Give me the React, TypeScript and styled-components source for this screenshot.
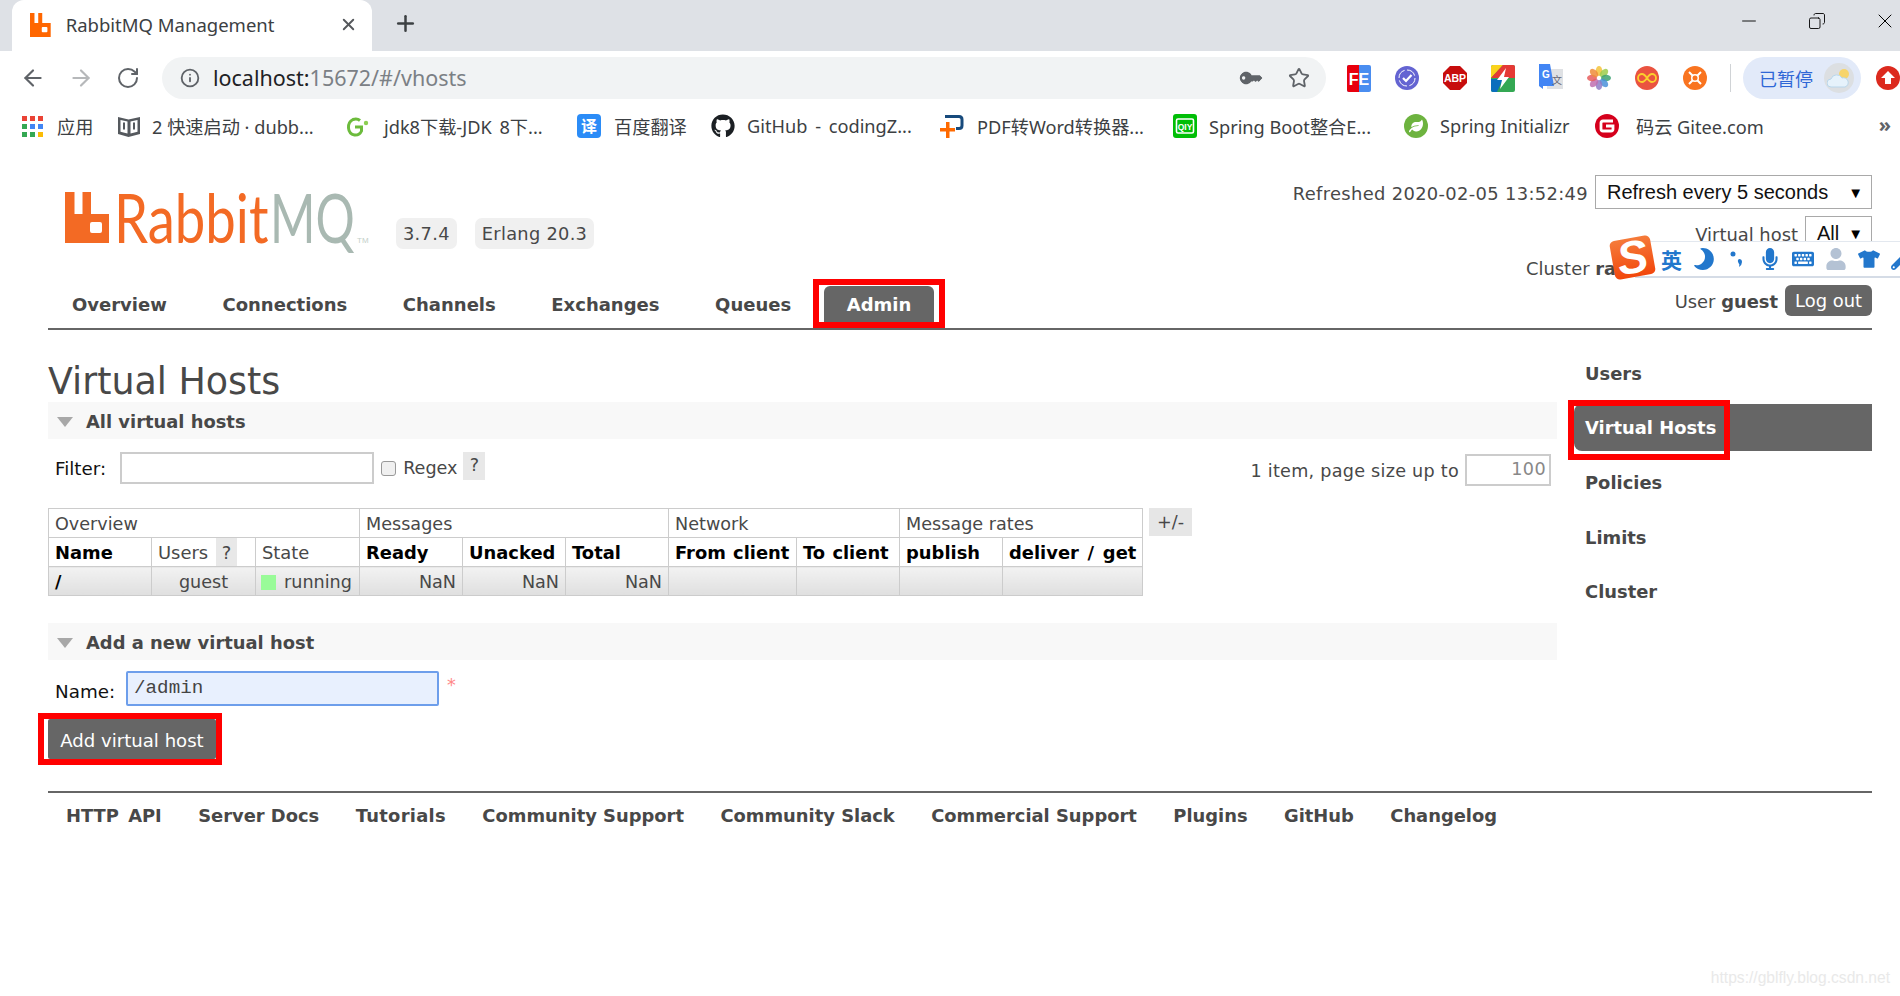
import React from "react";
import styled, { createGlobalStyle } from "styled-components";
import { ArrowLeft, ArrowRight, Info, Minus, Plus, RotateCw, Star, X, Copy } from "lucide-react";
import { FaGithub, FaKey, FaMicrophone, FaMoon, FaTshirt, FaUser, FaWrench, FaKeyboard, FaLeaf } from "react-icons/fa";

const GlobalStyle = createGlobalStyle`
  html, body {
    margin: 0;
    padding: 0;
    background: #fff;
    overflow: hidden;
  }
  * { box-sizing: border-box; }
`;

const VERDANA = `"DejaVu Sans", Verdana, sans-serif`;
const CHROME_FONT = `"Noto Sans", "Noto Sans CJK SC", sans-serif`;

const Shell = styled.div`
  position: relative;
  width: 1900px;
  height: 996px;
  overflow: hidden;
`;

/* browser chrome */
const TabStrip = styled.div`
  height: 51px;
  background: #dee1e6;
  display: flex;
  align-items: flex-end;
  padding-left: 12px;
`;

const Tab = styled.div`
  width: 360px;
  height: 51px;
  flex: none;
  background: #fff;
  border-radius: 12px 12px 0 0;
  display: flex;
  align-items: center;
  padding: 0 14px 2px 18px;
  color: #3c4043;
  font: 18.5px ${CHROME_FONT};
  svg { flex: none; }
`;

const TabTitle = styled.span`
  flex: 1;
  margin-left: 15px;
`;

const NewTab = styled.div`
  margin: 0 0 5px 21px;
  height: 46px;
  display: flex;
  align-items: center;
  color: #3c4043;
`;

const WindowButtons = styled.div`
  margin: 0 -19px auto auto;
  display: flex;
  align-items: center;
  height: 42px;
  color: #000;
`;

const WindowButton = styled.div`
  width: 68px;
  display: flex;
  justify-content: center;
`;

const Toolbar = styled.div`
  height: 54px;
  display: flex;
  align-items: flex-start;
  padding-top: 6px;
`;

const NavIcons = styled.div`
  width: 162px;
  height: 42px;
  flex: none;
  display: flex;
  align-items: center;
  padding-left: 20px;
  gap: 22px;
  color: #5f6368;
`;

const Omnibox = styled.div`
  width: 1164px;
  height: 42px;
  flex: none;
  border-radius: 21px;
  background: #f1f3f4;
  display: flex;
  align-items: center;
  padding: 0 16px 0 18px;
  color: #5f6368;
`;

const Url = styled.div`
  flex: 1;
  margin: 0 0 2px 13px;
  font: 21.5px ${CHROME_FONT};
  color: #7b8085;
  b {
    font-weight: 400;
    color: #202124;
  }
`;

const OmniIcons = styled.div`
  display: flex;
  align-items: center;
  gap: 29px;
`;

const Extensions = styled.div<{ $pad: number }>`
  height: 42px;
  flex: none;
  display: flex;
  align-items: center;
  padding-left: ${(p) => p.$pad}px;
  gap: 24px;
`;

const ToolbarSeparator = styled.div`
  width: 1px;
  height: 28px;
  background: #d0d3d6;
  margin-left: -1px;
`;

const PausedPill = styled.div`
  margin-left: 12px;
  width: 118px;
  height: 42px;
  flex: none;
  border-radius: 21px;
  background: #e2eaf9;
  display: flex;
  align-items: center;
  padding-left: 16px;
  font: 18px "Noto Sans CJK SC", sans-serif;
  color: #2f67d6;
`;

const Weather = styled.div`
  margin-left: 11px;
  width: 30px;
  height: 30px;
  border-radius: 50%;
  background: #dcdfe2;
  display: flex;
  align-items: center;
  justify-content: center;
`;

const BookmarkBar = styled.div`
  height: 42px;
  display: flex;
  align-items: center;
  position: relative;
  padding-left: 22px;
  font: 18.2px ${CHROME_FONT};
  color: #3c4043;
`;

const Bookmark = styled.div<{ $width: number; $gap?: number; $spread?: boolean }>`
  width: ${(p) => p.$width}px;
  flex: none;
  display: flex;
  align-items: center;
  gap: ${(p) => p.$gap ?? 13}px;
  white-space: nowrap;
  word-spacing: ${(p) => (p.$spread ? "3px" : "normal")};
  svg { flex: none; }
`;

const BookmarkMore = styled.div`
  position: absolute;
  right: 9px;
  top: 6px;
  font: bold 20px ${CHROME_FONT};
  color: #5f6368;
`;

/* management page */
const Page = styled.div`
  padding: 0 28px 0 48px;
  font-family: ${VERDANA};
  font-size: 17.6px;
  color: #484848;
`;

const Header = styled.div`
  display: flex;
  justify-content: space-between;
  height: 183px;
  border-bottom: 2px solid #666;
`;

const LogoRow = styled.div`
  display: flex;
  align-items: flex-end;
  height: 102px;
  padding-left: 17px;
`;

const LogoSvg = styled.svg`
  flex: none;
  margin-bottom: -10px;
`;

const Badge = styled.div<{ $gap: number }>`
  height: 31px;
  line-height: 32px;
  margin-left: ${(p) => p.$gap}px;
  padding: 0 7px;
  border-radius: 7px;
  background: #f0f0f0;
  font-size: 17.8px;
  letter-spacing: 0.3px;
`;

const Nav = styled.div`
  display: flex;
  margin: 37px 0 0 1px;
  gap: 9.6px;
`;

const NavItem = styled.div<{ $active?: boolean }>`
  position: relative;
  height: 36px;
  line-height: 38px;
  padding: 0 23px;
  font-weight: bold;
  font-size: 18px;
  color: ${(p) => (p.$active ? "#fff" : "#484848")};
  background: ${(p) => (p.$active ? "#666" : "transparent")};
  border-radius: 6px 6px 0 0;
`;

const HeaderInfo = styled.div`
  display: flex;
  flex-direction: column;
  align-items: flex-end;
  padding-top: 28px;
`;

const InfoRow = styled.div<{ $height: number; $top: number }>`
  display: flex;
  align-items: center;
  height: ${(p) => p.$height}px;
  margin-top: ${(p) => p.$top}px;
  gap: 7px;
  font-size: 17.9px;
`;

const InfoText = styled.span<{ $tracking?: number }>`
  margin-top: 2px;
  letter-spacing: ${(p) => p.$tracking ?? 0}px;
`;

const ClusterLine = styled.div`
  width: 346px;
  white-space: nowrap;
`;

const FakeSelect = styled.div<{ $width: number }>`
  height: 34px;
  display: flex;
  align-items: center;
  justify-content: space-between;
  border: 1px solid #a9a9a9;
  background: #fff;
  padding: 1px 8px 0 11px;
  color: #111;
  font: 20px "Liberation Sans", Arial, sans-serif;
  width: ${(p) => p.$width}px;
`;

const SelectArrow = styled.span`
  font-size: 15px;
  color: #000;
`;

const LogOut = styled.div`
  height: 31px;
  line-height: 32px;
  padding: 0 10px;
  border-radius: 6px;
  background: #666;
  color: #fff;
`;

const Main = styled.div`
  display: flex;
  gap: 17px;
`;

const Content = styled.div`
  width: 1509px;
  flex: none;
`;

const Title = styled.h1`
  margin: 0;
  height: 72px;
  padding-top: 33px;
  font-size: 36.4px;
  line-height: 38px;
  font-weight: normal;
  color: #484848;
`;

const SectionHeader = styled.div<{ $top?: number }>`
  height: 37px;
  margin-top: ${(p) => p.$top ?? 0}px;
  background: #f8f8f8;
  display: flex;
  align-items: center;
  padding: 2px 0 0 9px;
  gap: 13px;
  font-weight: bold;
  font-size: 17.9px;
`;

const Triangle = styled.span`
  width: 0;
  height: 0;
  border-left: 8.5px solid transparent;
  border-right: 8.5px solid transparent;
  border-top: 10px solid #a8a8a8;
`;

const FilterRow = styled.div`
  display: flex;
  justify-content: space-between;
  height: 32px;
  margin-top: 13px;
  padding: 0 6px 0 7px;
`;

const FilterLeft = styled.div`
  display: flex;
  align-items: center;
  gap: 7px;
`;

const FieldLabel = styled.label`
  color: #111;
  font-size: 18.3px;
`;

const TextBox = styled.input<{ $width: number }>`
  width: ${(p) => p.$width}px;
  height: 32px;
  margin: 0 0 0 7px;
  border: 2px solid #ccc;
  background: #fff;
  outline: none;
`;

const RegexCheck = styled.input`
  appearance: none;
  width: 15px;
  height: 15px;
  margin: 0;
  border: 1px solid #999;
  border-radius: 3px;
  background: #f0f0f0;
`;

const HelpBox = styled.span`
  display: inline-block;
  width: 22px;
  height: 28px;
  margin: 0 0 4px -1px;
  text-align: center;
  line-height: 27px;
  background: #e8e8e8;
`;

const PageSize = styled.div`
  display: flex;
  align-items: center;
  gap: 6px;
  padding-top: 3px;
`;

const PageSizeBox = styled.div`
  width: 86px;
  height: 32px;
  border: 2px solid #ccc;
  text-align: right;
  padding-right: 3px;
  line-height: 26px;
  color: #888;
  letter-spacing: 0.4px;
`;

const TableRow = styled.div`
  display: flex;
  align-items: flex-start;
  margin-top: 24px;
  gap: 6px;
`;

const Table = styled.table`
  width: 1094px;
  table-layout: fixed;
  border-collapse: collapse;
  font-size: 17.6px;
`;

const Col = styled.col<{ $w: number }>`
  width: ${(p) => p.$w}px;
`;

const GroupCell = styled.th`
  height: 29px;
  padding: 2px 0 0 6px;
  border: 1px solid #ccc;
  text-align: left;
  font-weight: normal;
  color: #484848;
`;

const HeadCell = styled.th<{ $plain?: boolean; $spaced?: boolean }>`
  position: relative;
  height: 29px;
  padding: 1px 0 0 6px;
  border: 1px solid #ccc;
  text-align: left;
  white-space: nowrap;
  word-spacing: ${(p) => (p.$spaced ? "2.5px" : "1px")};
  font-size: 17.9px;
  font-weight: ${(p) => (p.$plain ? "normal" : "bold")};
  color: ${(p) => (p.$plain ? "#484848" : "#000")};
`;

const HeadHelp = styled.span`
  position: absolute;
  top: 0;
  right: 18px;
  width: 21px;
  height: 28px;
  line-height: 29px;
  text-align: center;
  background: #e8e8e8;
`;

const BodyCell = styled.td<{ $align?: string; $bold?: boolean }>`
  height: 29px;
  padding: 2px 6px 0 6px;
  border: 1px solid #ccc;
  background: linear-gradient(#f2f2f2, #dfdfdf);
  text-align: ${(p) => p.$align ?? "right"};
  font-weight: ${(p) => (p.$bold ? "bold" : "normal")};
  color: ${(p) => (p.$bold ? "#000" : "#484848")};
  white-space: nowrap;
`;

const StateSwatch = styled.span`
  display: inline-block;
  width: 15px;
  height: 15px;
  margin: 0 8px 0 -1px;
  vertical-align: -2px;
  background: #99fb98;
`;

const ToggleColumns = styled.div`
  width: 43px;
  height: 28px;
  line-height: 29px;
  text-align: center;
  background: #e6e6e6;
`;

const NameRow = styled.div`
  display: flex;
  align-items: center;
  height: 35px;
  margin-top: 11px;
  padding-left: 7px;
`;

const NameLabel = styled(FieldLabel)`
  margin-top: 6px;
`;

const NameBox = styled.input`
  width: 313px;
  height: 35px;
  margin: 0 0 0 11px;
  padding: 0 0 1px 6px;
  border: 2px solid #6d9eeb;
  border-radius: 2px;
  outline: none;
  background: #e8f0fe;
  color: #444;
  font: 19.2px "Liberation Mono", "Courier New", monospace;
`;

const Required = styled.span`
  margin: 0 0 8px 8px;
  color: #f88;
`;

const SubmitWrap = styled.div`
  position: relative;
  width: 168px;
  margin-top: 13px;
`;

const Submit = styled.div`
  height: 40px;
  line-height: 43px;
  background: #666;
  color: #fff;
  text-align: center;
  border-radius: 2px;
  font-size: 18.1px;
`;

const Highlight = styled.div<{ $l: number; $t: number; $r: number; $b: number }>`
  position: absolute;
  left: ${(p) => p.$l}px;
  top: ${(p) => p.$t}px;
  right: ${(p) => p.$r}px;
  bottom: ${(p) => p.$b}px;
  border: 6px solid #f00;
  pointer-events: none;
`;

const Sidebar = styled.div`
  width: 298px;
  flex: none;
  padding-top: 19px;
`;

const SideItem = styled.div<{ $active?: boolean }>`
  position: relative;
  height: 47px;
  line-height: ${(p) => (p.$active ? 48 : 50)}px;
  margin-bottom: 7.5px;
  padding-left: 11px;
  font-weight: bold;
  font-size: 17.9px;
  border-radius: 8px 0 0 8px;
  color: ${(p) => (p.$active ? "#fff" : "#484848")};
  background: ${(p) => (p.$active ? "#666" : "transparent")};
`;

const Footer = styled.div`
  margin-top: 32px;
  border-top: 2px solid #666;
  display: flex;
  gap: 36.4px;
  padding: 12px 0 0 18px;
  font-weight: bold;
  font-size: 17.9px;
  span:first-child { word-spacing: 3px; }
  span:nth-child(3) { letter-spacing: 0.3px; }
`;

const Watermark = styled.div`
  position: absolute;
  right: 10px;
  bottom: 9px;
  font: 15.6px "Liberation Sans", Arial, sans-serif;
  color: #e9e9e9;
`;

/* floating input method bar */
const ImeBar = styled.div`
  position: absolute;
  left: 1635px;
  top: 241px;
  width: 270px;
  height: 37px;
  display: flex;
  align-items: center;
  gap: 11px;
  padding-left: 25px;
  background: #fff;
  border: 1px solid #e3e8ef;
  border-bottom: 2px solid #d5dce6;
  color: #2277cc;
  svg { flex: none; }
`;

const ImeText = styled.span`
  width: 22px;
  font: bold 21px "Noto Sans CJK SC", sans-serif;
  color: #2277cc;
`;

const ImeMoon = styled(FaMoon)`
  transform: scaleX(-1);
`;

const ImeLogo = styled.div`
  position: absolute;
  left: 1612px;
  top: 238px;
  width: 41px;
  height: 39px;
  border-radius: 5px;
  transform: rotate(-10deg);
  background: linear-gradient(#f57b3a, #f2470c);
  color: #fff;
  text-align: center;
  font: italic bold 46px/39px "Liberation Sans", Arial, sans-serif;
`;

const RabbitMark = ({ size, color }: { size: number; color: string }) => (
  <svg width={(size * 44) / 51} height={size} viewBox="0 0 44 51">
    <path
      fillRule="evenodd"
      fill={color}
      d="M0 0H9.500V21H17.500V0H26V21H44V51H0ZM27 30Q25 30 25 32V39Q25 41 27 41H35Q37 41 37 39V32Q37 30 35 30Z"
    />
  </svg>
);

const Logo = () => (
  <LogoSvg width="306" height="90" viewBox="0 -20 306 90">
    <g transform="translate(0 3)">
      <path
        fillRule="evenodd"
        fill="#f36a24"
        d="M0 0H9.500V22H17.500V0H26V22H44V51H0ZM27 30Q25 30 25 32V39Q25 41 27 41H35Q37 41 37 39V32Q37 30 35 30Z"
      />
    </g>
    <text transform="translate(49 54) scale(1.09 1.36)" fontFamily="Lato, 'Open Sans', sans-serif" fontSize="50" fill="#f36a24">
      Rabbit
    </text>
    <text transform="translate(205 54) scale(0.98 1.36)" fontFamily="Lato, 'Open Sans', sans-serif" fontSize="50" fill="#a9b9b2">
      MQ
    </text>
    <text x="292" y="54" fontFamily="'Liberation Sans', sans-serif" fontSize="8" fill="#c4cfca">
      TM
    </text>
  </LogoSvg>
);

const AppsGrid = () => (
  <svg width="21" height="21" viewBox="0 0 21 21">
    {["#ea4335", "#ea4335", "#ea4335", "#34a853", "#4285f4", "#4285f4", "#34a853", "#34a853", "#fbbc05"].map((c, i) => (
      <rect key={i} x={(i % 3) * 8} y={Math.floor(i / 3) * 8} width="5" height="5" fill={c} />
    ))}
  </svg>
);

const BookIcon = () => (
  <svg width="24" height="24" viewBox="0 0 24 24">
    <path fill="#55595e" d="M1 3l10.500 2.500L23 3v17l-11.500 3L1 20z" />
    <path fill="#fff" d="M3.500 6l7 1.500v12l-7-1.800zM20.500 6l-7 1.500v12l7-1.800z" />
    <path fill="#55595e" d="M6 8.500h2v7H6zM16 8.500h2v7h-2z" />
  </svg>
);

const GreenG = () => (
  <svg width="26" height="24" viewBox="0 0 26 24">
    <path fill="none" stroke="#6cbb3c" strokeWidth="3" d="M15 6.500Q12 4 8 5.500 3 8 3.500 14t6 7q5 .5 7-4v-4H10" />
    <circle cx="21" cy="9" r="2.200" fill="#8ccf52" />
  </svg>
);

const TranslateMark = () => (
  <svg width="24" height="24" viewBox="0 0 24 24">
    <rect x="0" y="0" width="24" height="24" rx="4" fill="#2b8cf7" />
    <text x="12" y="18" textAnchor="middle" fontFamily="'Noto Sans CJK SC'" fontSize="16" fontWeight="700" fill="#fff">
      译
    </text>
  </svg>
);

const PdfMark = () => (
  <svg width="24" height="24" viewBox="0 0 24 24">
    <path fill="none" stroke="#174a7c" strokeWidth="3" d="M5 2.500h14q3 0 3 3v6q0 3-3 3h-3" />
    <path fill="#ff6a00" d="M6 8h3.500v6H15v3.500H9.500V24H6v-6.500H0V14h6z" />
  </svg>
);

const IqiyiMark = () => (
  <svg width="24" height="24" viewBox="0 0 24 24">
    <rect width="24" height="24" rx="3" fill="#00be06" />
    <rect x="3.500" y="5" width="17" height="14" rx="1.500" fill="none" stroke="#fff" strokeWidth="1.600" />
    <text x="12" y="16" textAnchor="middle" fontFamily="'Liberation Sans'" fontWeight="700" fontSize="8.500" fill="#fff">
      QIY
    </text>
  </svg>
);

const SpringMark = () => (
  <svg width="24" height="24" viewBox="0 0 24 24">
    <circle cx="12" cy="12" r="12" fill="#6db33f" />
    <FaLeaf x="5" y="5" size="14" color="#fff" />
  </svg>
);

const GiteeMark = () => (
  <svg width="24" height="24" viewBox="0 0 24 24">
    <circle cx="12" cy="12" r="12" fill="#d5001c" />
    <path fill="none" stroke="#fff" strokeWidth="2.800" d="M18 7H8Q6 7 6 9v6q0 2 2 2h8q2 0 2-2v-3h-7" />
  </svg>
);

const FeIcon = () => (
  <svg width="24" height="27" viewBox="0 0 24 27">
    <rect width="24" height="27" rx="2" fill="#4a8df0" />
    <path d="M2 0H12V27H2Q0 27 0 25V2Q0 0 2 0Z" fill="#e8000d" />
    <text x="12" y="20" textAnchor="middle" fontFamily="'Liberation Sans'" fontWeight="700" fontSize="16" fill="#fff">
      FE
    </text>
  </svg>
);

const CheckIcon = () => (
  <svg width="24" height="24" viewBox="0 0 24 24">
    <circle cx="12" cy="12" r="12" fill="#6464d2" />
    <circle cx="12" cy="12" r="8" fill="none" stroke="#fff" strokeWidth="1" strokeDasharray="10 2.500" />
    <path d="M8 12l3 3 5.500-6" fill="none" stroke="#fff" strokeWidth="2.200" />
  </svg>
);

const AbpIcon = () => (
  <svg width="24" height="24" viewBox="0 0 24 24">
    <path fill="#c70d0d" d="M7 0H17L24 7V17L17 24H7L0 17V7Z" />
    <text x="12" y="16" textAnchor="middle" fontFamily="'Liberation Sans'" fontWeight="700" fontSize="10.500" fill="#fff">
      ABP
    </text>
  </svg>
);

const BoltIcon = () => (
  <svg width="24" height="27" viewBox="0 0 24 27">
    <rect width="24" height="27" rx="2" fill="#34a853" />
    <path d="M2 0H12L0 13V2Q0 0 2 0Z" fill="#fbd31c" />
    <path d="M12 0H22Q24 0 24 2V13H0Z" fill="#e53935" />
    <path d="M0 14H12L6 27H2Q0 27 0 25Z" fill="#0a6ebd" />
    <path d="M15 3L6 15h5l-2 9 9-12h-5z" fill="#fff" />
  </svg>
);

const TranslateIcon = () => (
  <svg width="24" height="28" viewBox="0 0 24 28">
    <rect x="8" y="5" width="16" height="20" fill="#dfe1e4" />
    <path d="M0 0H11L15 22H4V25L0 22Z" fill="#4285f4" />
    <text x="7" y="14" textAnchor="middle" fontFamily="'Liberation Sans'" fontWeight="700" fontSize="10" fill="#fff">
      G
    </text>
    <text x="18" y="20" textAnchor="middle" fontFamily="'Noto Sans CJK SC'" fontSize="10" fill="#667">
      文
    </text>
  </svg>
);

const PhotosIcon = () => (
  <svg width="24" height="24" viewBox="0 0 24 24">
    {["#f5c33b", "#9ccc4c", "#3ba272", "#4a90d9", "#8f7cc7", "#c06fb0", "#e85d5d", "#ef8c3a"].map((c, i) => (
      <ellipse key={i} cx="12" cy="5" rx="3.300" ry="5" fill={c} opacity="0.85" transform={`rotate(${i * 45} 12 12)`} />
    ))}
  </svg>
);

const InfinityIcon = () => (
  <svg width="24" height="24" viewBox="0 0 24 24">
    <circle cx="12" cy="12" r="12" fill="#ea5340" />
    <path d="M12 12c-2-3-3.500-4-5-4a4 4 0 000 8c1.500 0 3-1 5-4s3.500-4 5-4a4 4 0 010 8c-1.500 0-3-1-5-4z" fill="none" stroke="#fbd02d" strokeWidth="1.800" />
  </svg>
);

const OrangeIcon = () => (
  <svg width="24" height="24" viewBox="0 0 24 24">
    <circle cx="12" cy="12" r="12" fill="#f97420" />
    <circle cx="12" cy="12" r="4" fill="#fff" />
    <path d="M6 6l12 12M18 6L6 18" stroke="#fff" strokeWidth="2" />
    <circle cx="12" cy="12" r="2.500" fill="#f97420" />
  </svg>
);

const UploadIcon = () => (
  <svg width="24" height="24" viewBox="0 0 24 24">
    <circle cx="12" cy="12" r="12" fill="#dc2a1e" />
    <path fill="#fff" d="M12 5l7 7h-4v6H9v-6H5z" />
  </svg>
);

const CloudIcon = () => (
  <svg width="24" height="22" viewBox="0 0 24 22">
    <circle cx="17" cy="7" r="5" fill="#f7d46b" />
    <path fill="#e6f2fb" stroke="#b9d6ea" d="M4 20a4 4 0 010-8 6 6 0 0111-1 4.500 4.500 0 013 9z" />
  </svg>
);

const PunctIcon = () => (
  <svg width="22" height="22" viewBox="0 0 22 22" fill="#2277cc">
    <circle cx="7" cy="6" r="2.500" />
    <path d="M13 11q3 0 3 3 0 3-3 5 1-3-.5-4-1.500-3 .5-4z" />
  </svg>
);

const NAV_ITEMS = ["Overview", "Connections", "Channels", "Exchanges", "Queues"];
const FOOTER_LINKS = [
  "HTTP API",
  "Server Docs",
  "Tutorials",
  "Community Support",
  "Community Slack",
  "Commercial Support",
  "Plugins",
  "GitHub",
  "Changelog",
];
const COLS = [103, 104, 104, 103, 103, 103, 128, 103, 103, 140];

const App = () => (
  <Shell>
    <GlobalStyle />
    <TabStrip>
      <Tab>
        <RabbitMark size={24} color="#ff6600" />
        <TabTitle>RabbitMQ Management</TabTitle>
        <X size={19} strokeWidth={2.4} color="#55585c" />
      </Tab>
      <NewTab>
        <Plus size={25} strokeWidth={2.4} />
      </NewTab>
      <WindowButtons>
        <WindowButton>
          <Minus size={22} strokeWidth={1} />
        </WindowButton>
        <WindowButton>
          <Copy size={18} strokeWidth={1.2} style={{ transform: "scaleX(-1)" }} />
        </WindowButton>
        <WindowButton>
          <X size={24} strokeWidth={1} />
        </WindowButton>
      </WindowButtons>
    </TabStrip>

    <Toolbar>
      <NavIcons>
        <ArrowLeft size={26} strokeWidth={2} />
        <ArrowRight size={26} strokeWidth={2} color="#b6b8ba" />
        <RotateCw size={24} strokeWidth={2} />
      </NavIcons>
      <Omnibox>
        <Info size={20} strokeWidth={2.2} />
        <Url>
          <b>localhost:</b>15672/#/vhosts
        </Url>
        <OmniIcons>
          <FaKey size={18} style={{ transform: "scaleX(-1) rotate(45deg)" }} />
          <Star size={22} strokeWidth={2} />
        </OmniIcons>
      </Omnibox>
      <Extensions $pad={21}>
        <FeIcon />
        <CheckIcon />
        <AbpIcon />
        <BoltIcon />
        <TranslateIcon />
        <PhotosIcon />
        <InfinityIcon />
        <OrangeIcon />
        <ToolbarSeparator />
      </Extensions>
      <PausedPill>
        已暂停
        <Weather>
          <CloudIcon />
        </Weather>
      </PausedPill>
      <Extensions $pad={15}>
        <UploadIcon />
      </Extensions>
    </Toolbar>

    <BookmarkBar>
      <Bookmark $width={95} $gap={14}>
        <AppsGrid />
        应用
      </Bookmark>
      <Bookmark $width={228} $gap={11}>
        <BookIcon />2 快速启动 · dubb...
      </Bookmark>
      <Bookmark $width={232} $gap={13} $spread>
        <GreenG />
        jdk8下载-JDK 8下...
      </Bookmark>
      <Bookmark $width={134}>
        <TranslateMark />
        百度翻译
      </Bookmark>
      <Bookmark $width={229} $gap={12} $spread>
        <FaGithub size={24} color="#1b1f23" />
        GitHub - codingZ...
      </Bookmark>
      <Bookmark $width={233}>
        <PdfMark />
        PDF转Word转换器...
      </Bookmark>
      <Bookmark $width={231} $gap={12}>
        <IqiyiMark />
        Spring Boot整合E...
      </Bookmark>
      <Bookmark $width={191} $gap={12}>
        <SpringMark />
        Spring Initializr
      </Bookmark>
      <Bookmark $width={170} $gap={17}>
        <GiteeMark />
        码云 Gitee.com
      </Bookmark>
      <BookmarkMore>»</BookmarkMore>
    </BookmarkBar>

    <Page>
      <Header>
        <div>
          <LogoRow>
            <Logo />
            <Badge $gap={25}>3.7.4</Badge>
            <Badge $gap={18}>Erlang 20.3</Badge>
          </LogoRow>
          <Nav>
            {NAV_ITEMS.map((item) => (
              <NavItem key={item}>{item}</NavItem>
            ))}
            <NavItem $active>
              Admin
              <Highlight $l={-11} $t={-7} $r={-11} $b={-6} />
            </NavItem>
          </Nav>
        </div>
        <HeaderInfo>
          <InfoRow $height={34} $top={0}>
            <InfoText $tracking={0.33}>Refreshed 2020-02-05 13:52:49</InfoText>
            <FakeSelect $width={277}>
              Refresh every 5 seconds
              <SelectArrow>▼</SelectArrow>
            </FakeSelect>
          </InfoRow>
          <InfoRow $height={34} $top={7}>
            <InfoText>Virtual host</InfoText>
            <FakeSelect $width={67}>
              All
              <SelectArrow>▼</SelectArrow>
            </FakeSelect>
          </InfoRow>
          <InfoRow $height={24} $top={6}>
            <ClusterLine>
              Cluster <b>ra</b>
            </ClusterLine>
          </InfoRow>
          <InfoRow $height={31} $top={5}>
            <InfoText>
              User <b>guest</b>
            </InfoText>
            <LogOut>Log out</LogOut>
          </InfoRow>
        </HeaderInfo>
      </Header>

      <Main>
        <Content>
          <Title>Virtual Hosts</Title>
          <SectionHeader>
            <Triangle />
            All virtual hosts
          </SectionHeader>
          <FilterRow>
            <FilterLeft>
              <FieldLabel>Filter:</FieldLabel>
              <TextBox $width={254} readOnly />
              <RegexCheck type="checkbox" readOnly />
              <span>Regex</span>
              <HelpBox>?</HelpBox>
            </FilterLeft>
            <PageSize>
              <InfoText $tracking={0.26}>1 item, page size up to</InfoText>
              <PageSizeBox>100</PageSizeBox>
            </PageSize>
          </FilterRow>
          <TableRow>
            <Table>
              <colgroup>
                {COLS.map((w, i) => (
                  <Col key={i} $w={w} />
                ))}
              </colgroup>
              <thead>
                <tr>
                  <GroupCell colSpan={3}>Overview</GroupCell>
                  <GroupCell colSpan={3}>Messages</GroupCell>
                  <GroupCell colSpan={2}>Network</GroupCell>
                  <GroupCell colSpan={2}>Message rates</GroupCell>
                </tr>
                <tr>
                  <HeadCell>Name</HeadCell>
                  <HeadCell $plain>
                    Users<HeadHelp>?</HeadHelp>
                  </HeadCell>
                  <HeadCell $plain>State</HeadCell>
                  <HeadCell>Ready</HeadCell>
                  <HeadCell>Unacked</HeadCell>
                  <HeadCell>Total</HeadCell>
                  <HeadCell>From client</HeadCell>
                  <HeadCell>To client</HeadCell>
                  <HeadCell>publish</HeadCell>
                  <HeadCell $spaced>deliver / get</HeadCell>
                </tr>
              </thead>
              <tbody>
                <tr>
                  <BodyCell $align="left" $bold>
                    /
                  </BodyCell>
                  <BodyCell $align="center">guest</BodyCell>
                  <BodyCell $align="left">
                    <StateSwatch />
                    running
                  </BodyCell>
                  <BodyCell>NaN</BodyCell>
                  <BodyCell>NaN</BodyCell>
                  <BodyCell>NaN</BodyCell>
                  <BodyCell />
                  <BodyCell />
                  <BodyCell />
                  <BodyCell />
                </tr>
              </tbody>
            </Table>
            <ToggleColumns>+/-</ToggleColumns>
          </TableRow>
          <SectionHeader $top={27}>
            <Triangle />
            Add a new virtual host
          </SectionHeader>
          <NameRow>
            <NameLabel>Name:</NameLabel>
            <NameBox defaultValue="/admin" />
            <Required>*</Required>
          </NameRow>
          <SubmitWrap>
            <Submit>Add virtual host</Submit>
            <Highlight $l={-10} $t={-6} $r={-6} $b={-6} />
          </SubmitWrap>
        </Content>
        <Sidebar>
          <SideItem>Users</SideItem>
          <SideItem $active>
            Virtual Hosts
            <Highlight $l={-6} $t={-4} $r={142} $b={-9} />
          </SideItem>
          <SideItem>Policies</SideItem>
          <SideItem>Limits</SideItem>
          <SideItem>Cluster</SideItem>
        </Sidebar>
      </Main>

      <Footer>
        {FOOTER_LINKS.map((link) => (
          <span key={link}>{link}</span>
        ))}
      </Footer>
    </Page>

    <ImeBar>
      <ImeText>英</ImeText>
      <ImeMoon size={22} />
      <PunctIcon />
      <FaMicrophone size={22} />
      <FaKeyboard size={22} />
      <FaUser size={22} color="#b4c2d4" />
      <FaTshirt size={22} />
      <FaWrench size={22} />
    </ImeBar>
    <ImeLogo>S</ImeLogo>
    <Watermark>https://gblfly.blog.csdn.net</Watermark>
  </Shell>
);

export default App;
